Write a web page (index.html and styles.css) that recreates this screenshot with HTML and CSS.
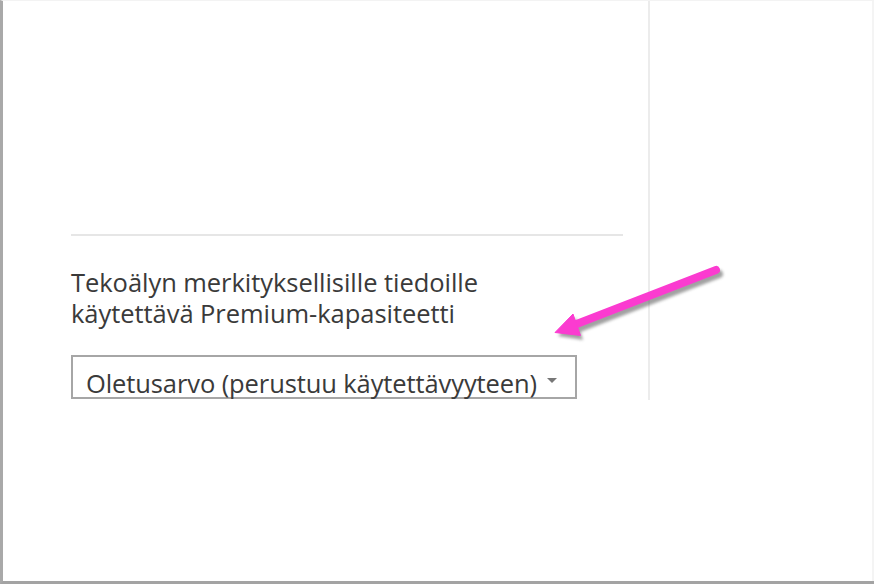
FILE: index.html
```html
<!DOCTYPE html>
<html lang="fi">
<head>
<meta charset="utf-8">
<link rel="stylesheet" href="styles.css">
</head>
<body>
<div class="frame">
  <div class="panel">
    <div class="content">
      <div class="rule"></div>
      <div class="label">Tekoälyn merkityksellisille tiedoille käytettävä Premium-kapasiteetti</div>
      <div class="select">
        <span class="select-text">Oletusarvo (perustuu käytettävyyteen)</span>
        <span class="caret"></span>
      </div>
    </div>
  </div>
  <div class="divider"></div>
  <div class="side"></div>
  <svg class="arrow" width="200" height="100" viewBox="540 250 200 100">
    <defs>
      <filter id="sh" x="-20%" y="-50%" width="140%" height="200%">
        <feGaussianBlur stdDeviation="1.6"/>
      </filter>
    </defs>
    <g transform="translate(3,4)" filter="url(#sh)" opacity="0.55">
      <line x1="716" y1="270" x2="574" y2="325" stroke="#555" stroke-width="8" stroke-linecap="round"/>
      <polygon points="555,332 573,314 580,336" fill="#555"/>
    </g>
    <line x1="716" y1="270" x2="574" y2="325" stroke="#fb3bd0" stroke-width="8" stroke-linecap="round"/>
    <polygon points="555,332.5 573,314 580.5,335.5" fill="#fb3bd0" stroke="#fb3bd0" stroke-width="1" stroke-linejoin="round"/>
  </svg>
</div>
</body>
</html>
```

FILE: styles.css
```css
html, body {
  margin: 0;
  padding: 0;
  background: #ffffff;
}
.frame {
  position: relative;
  width: 874px;
  height: 584px;
  box-sizing: border-box;
  border-left: 3px solid #a9a9a9;
  border-bottom: 3px solid #a3a3a3;
  border-top: 1px solid #f3f3f3;
  display: flex;
  align-items: flex-start;
  font-family: "Open Sans", "Noto Sans", sans-serif;
  color: #3a3a3a;
}
.panel {
  width: 645px;
  flex: none;
}
.content {
  margin-left: 68px;
  width: 552px;
  padding-top: 233px;
}
.rule {
  height: 2px;
  background: #e6e6e6;
}
.label {
  margin-top: 31px;
  font-size: 25.5px;
  line-height: 31px;
  width: 520px;
  letter-spacing: -0.05px;
}
.select {
  margin-top: 26px;
  width: 506px;
  height: 44px;
  box-sizing: border-box;
  border: 2px solid #a6a6a6;
  display: flex;
  align-items: flex-end;
  padding-left: 13px;
  gap: 10px;
}
.select-text {
  font-size: 25.5px;
  line-height: 28px;
  letter-spacing: -0.1px;
  white-space: nowrap;
}
.caret {
  width: 0;
  height: 0;
  border-left: 5px solid transparent;
  border-right: 5px solid transparent;
  border-top: 5px solid #777;
  margin-bottom: 14px;
}
.divider {
  width: 2px;
  height: 399px;
  background: #ececec;
  flex: none;
}
.side {
  flex: 1;
  height: 100%;
  border-right: 2px solid #f4f4f4;
}
.arrow {
  position: absolute;
  left: 537px;
  top: 249px;
}
```
